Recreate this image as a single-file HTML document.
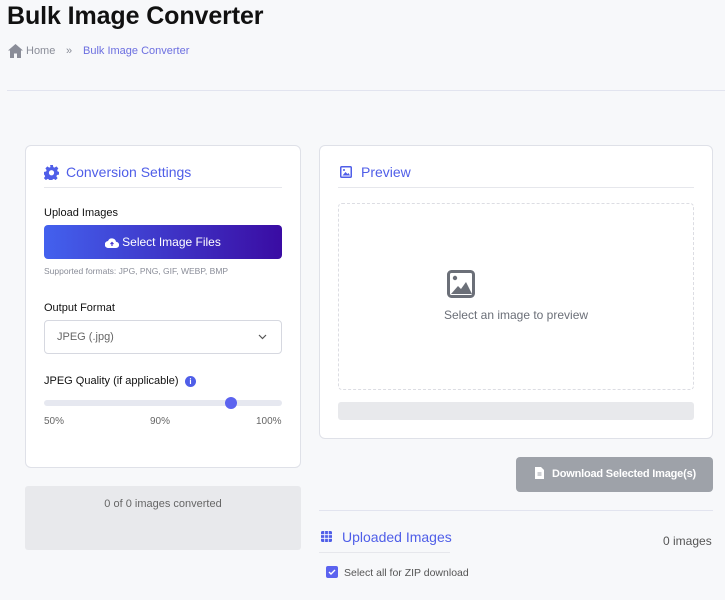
<!DOCTYPE html>
<html><head><style>
*{box-sizing:border-box;margin:0;padding:0}
body{width:725px;height:600px;background:#f7f8fa;font-family:"Liberation Sans",sans-serif;position:relative;overflow:hidden;color:#212529}
.a{position:absolute}
.card{position:absolute;background:#fff;border:1px solid #dfe1e8;border-radius:6px}
.h{color:#4f5ee8;font-size:14px}
.lbl{font-size:11px;color:#111}
</style></head><body>
<div class="a" style="left:7px;top:2px;font-size:25px;font-weight:bold;color:#111;letter-spacing:-0.1px">Bulk Image Converter</div>
<svg class="a" style="left:8px;top:44px" width="15" height="14" viewBox="0 0 15 14"><path d="M7.5 0L0 6.5h2V14h4V9.5h3V14h4V6.5h2z" fill="#8a8d98"/></svg>
<div class="a" style="left:26px;top:45px;font-size:11px;color:#8a8d98">Home</div>
<div class="a" style="left:66px;top:45px;font-size:11px;color:#8a8d98">»</div>
<div class="a" style="left:83px;top:45px;font-size:11px;color:#6c6fe0">Bulk Image Converter</div>
<div class="a" style="left:7px;top:90px;width:718px;height:1px;background:#e2e4ef"></div>

<div class="card" style="left:25px;top:145px;width:276px;height:323px"></div>
<svg class="a" style="left:44px;top:165px" width="15" height="15" viewBox="0 0 16 16"><path fill="#4f5ee8" d="M6.5 0h3l.4 2.2 1.4.6 1.9-1.3 2.1 2.1-1.3 1.9.6 1.4L16 7.3v3l-2.2.4-.6 1.4 1.3 1.9-2.1 2.1-1.9-1.3-1.4.6-.4 2.2h-3l-.4-2.2-1.4-.6-1.9 1.3-2.1-2.1 1.3-1.9-.6-1.4L0 10.3v-3l2.2-.4.6-1.4-1.3-1.9 2.1-2.1 1.9 1.3 1.4-.6zM8 5.5a2.8 2.8 0 100 5.6 2.8 2.8 0 000-5.6z"/></svg>
<div class="a h" style="left:66px;top:164px">Conversion Settings</div>
<div class="a" style="left:44px;top:187px;width:238px;height:1px;background:#e6e7ec"></div>
<div class="a lbl" style="left:44px;top:207px">Upload Images</div>
<div class="a" style="left:44px;top:225px;width:238px;height:34px;border-radius:4px;background:linear-gradient(90deg,#4361ee,#3a0ca3);color:#fff;font-size:12px;text-align:center;line-height:34px"><svg style="vertical-align:-2px;margin-right:3px" width="14" height="11" viewBox="0 0 14 11"><path d="M3.5 11A3.5 3.5 0 013 4a4.2 4.2 0 018 .8A3.1 3.1 0 0111 11z" fill="#fff"/><path d="M7 9V5.5M5.5 7L7 5.5 8.5 7" stroke="#4a3ad0" stroke-width="1.2" fill="none"/></svg>Select Image Files</div>
<div class="a" style="left:44px;top:266px;font-size:8.5px;color:#8a8d98">Supported formats: JPG, PNG, GIF, WEBP, BMP</div>
<div class="a lbl" style="left:44px;top:302px">Output Format</div>
<div class="a" style="left:44px;top:320px;width:238px;height:34px;border:1px solid #d6d8e0;border-radius:4px;font-size:11px;color:#666;padding:10px 0 0 12px">JPEG (.jpg)</div>
<svg class="a" style="left:258px;top:334px" width="9" height="6" viewBox="0 0 9 6"><path d="M1 1l3.5 3.5L8 1" stroke="#555" stroke-width="1.2" fill="none"/></svg>
<div class="a lbl" style="left:44px;top:375px">JPEG Quality (if applicable)</div>
<div class="a" style="left:185px;top:376px;width:11px;height:11px;border-radius:50%;background:#4f5ee8;color:#fff;font-size:8px;text-align:center;line-height:11px;font-weight:bold">i</div>
<div class="a" style="left:44px;top:400px;width:238px;height:6px;border-radius:3px;background:#e6e8f0"></div>
<div class="a" style="left:225px;top:397px;width:12px;height:12px;border-radius:50%;background:#5b63ef"></div>
<div class="a" style="left:44px;top:416px;font-size:10px;color:#666">50%</div>
<div class="a" style="left:150px;top:416px;font-size:10px;color:#666">90%</div>
<div class="a" style="left:256px;top:416px;font-size:10px;color:#666">100%</div>
<div class="a" style="left:25px;top:486px;width:276px;height:64px;background:#e8e9ec;border-radius:3px;font-size:11px;color:#666;text-align:center;padding-top:12px">0 of 0 images converted</div>

<div class="card" style="left:319px;top:145px;width:394px;height:294px"></div>
<svg class="a" style="left:340px;top:166px" width="12" height="12" viewBox="0 0 12 12"><rect x=".75" y=".75" width="10.5" height="10.5" rx="1" fill="none" stroke="#4f5ee8" stroke-width="1.5"/><path d="M2.5 9.5l3-3.5 2 2 1-1 1.5 2.5z" fill="#4f5ee8"/><circle cx="4" cy="4" r="1" fill="#4f5ee8"/></svg>
<div class="a h" style="left:361px;top:164px">Preview</div>
<div class="a" style="left:338px;top:187px;width:356px;height:1px;background:#e6e7ec"></div>
<div class="a" style="left:338px;top:203px;width:356px;height:187px;border:1px dashed #dcdde3;border-radius:4px"></div>
<svg class="a" style="left:447px;top:270px" width="28" height="28" viewBox="0 0 28 28"><rect x="1.5" y="1.5" width="25" height="25" rx="3" fill="none" stroke="#6b6f78" stroke-width="3"/><circle cx="8" cy="8" r="2.2" fill="#6b6f78"/><path d="M4 24l7-8 3 3 5-7 6 12z" fill="#6b6f78"/></svg>
<div class="a" style="left:338px;top:308px;width:356px;text-align:center;font-size:12px;color:#6b6f78">Select an image to preview</div>
<div class="a" style="left:338px;top:402px;width:356px;height:18px;background:#e8e9ec;border-radius:3px"></div>

<div class="a" style="left:516px;top:457px;width:197px;height:35px;background:#9ea2a9;border-radius:4px;color:#fff;font-size:11px;font-weight:bold;line-height:35px;padding-left:36px;letter-spacing:-0.2px">Download Selected Image(s)</div>
<svg class="a" style="left:535px;top:467px" width="9" height="12" viewBox="0 0 9 12"><path d="M0 0h6l3 3v9H0z" fill="#fff"/><path d="M2.5 6h4M2.5 8h4" stroke="#9ea2a9"/></svg>
<div class="a" style="left:319px;top:510px;width:394px;height:1px;background:#e2e4ef"></div>
<svg class="a" style="left:321px;top:531px" width="11" height="11" viewBox="0 0 11 11"><rect width="11" height="11" rx="1.5" fill="#4f5ee8"/><path d="M3.7 0v11M7.3 0v11M0 3.7h11M0 7.3h11" stroke="#fff" stroke-width=".8"/></svg>
<div class="a h" style="left:342px;top:529px">Uploaded Images</div>
<div class="a" style="left:319px;top:552px;width:131px;height:1px;background:#e6e7ec"></div>
<div class="a" style="left:663px;top:534px;font-size:12px;color:#555">0 images</div>
<div class="a" style="left:326px;top:566px;width:12px;height:12px;border-radius:2px;background:#5b63ef"></div>
<svg class="a" style="left:328px;top:569px" width="8" height="6" viewBox="0 0 8 6"><path d="M1 3l2 2 4-4" stroke="#fff" stroke-width="1.4" fill="none"/></svg>
<div class="a" style="left:344px;top:567px;font-size:10.5px;color:#555">Select all for ZIP download</div>
</body></html>
